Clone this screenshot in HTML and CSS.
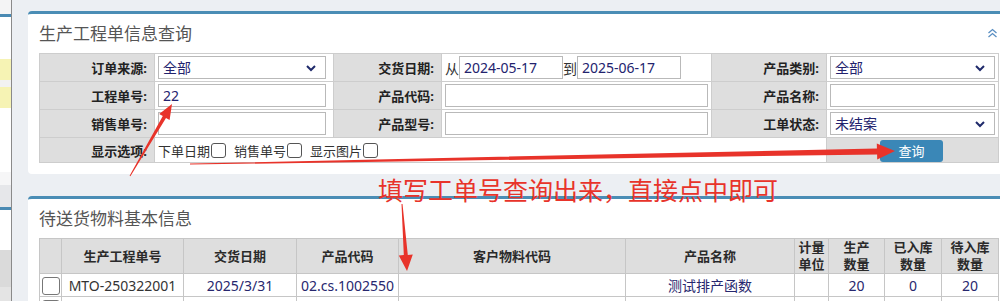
FILE: index.html
```html
<!DOCTYPE html>
<html lang="zh-CN">
<head>
  <meta charset="UTF-8">
  <title>生产工程单信息查询</title>
  <link rel="stylesheet" href="styles.css">
</head>
<body>
<div class="page">

  <div class="sidebar">
    <div class="sb-top"></div>
    <div class="sb-blue"></div>
    <div class="sb-white sb-h42"></div>
    <div class="sb-yellow"></div>
    <div class="sb-white sb-h7"></div>
    <div class="sb-yellow"></div>
    <div class="sb-white sb-h64"></div>
    <div class="sb-light"></div>
    <div class="sb-grey"></div>
    <div class="sb-blue"></div>
    <div class="sb-white sb-h40"></div>
    <div class="sb-dark"></div>
    <div class="sb-rest"></div>
  </div>

  <div class="main">

    <div class="panel">
      <div class="panel-head">
        <h3>生产工程单信息查询</h3>
        <svg class="collapse" width="11" height="10" viewBox="0 0 11 10">
          <path d="M1.5 5 L5.5 1.5 L9.5 5 M1.5 9 L5.5 5.5 L9.5 9" fill="none" stroke="#5a8fc2" stroke-width="1.3"/>
        </svg>
      </div>
      <table class="query">
        <colgroup>
          <col style="width:115px"><col style="width:179px"><col style="width:108px">
          <col style="width:270px"><col style="width:115px"><col style="width:172px">
        </colgroup>
        <tr>
          <td class="lbl">订单来源:</td>
          <td><div class="select narrow"><span>全部</span><svg width="12" height="8" viewBox="0 0 12 8"><path d="M2 2 L6 6 L10 2" fill="none" stroke="#1f2a6b" stroke-width="2"/></svg></div></td>
          <td class="lbl">交货日期:</td>
          <td><div class="dates">从<span class="box date">2024-05-17</span>到<span class="box date">2025-06-17</span></div></td>
          <td class="lbl">产品类别:</td>
          <td><div class="select"><span>全部</span><svg width="12" height="8" viewBox="0 0 12 8"><path d="M2 2 L6 6 L10 2" fill="none" stroke="#1f2a6b" stroke-width="2"/></svg></div></td>
        </tr>
        <tr>
          <td class="lbl">工程单号:</td>
          <td><div class="box narrow">22</div></td>
          <td class="lbl">产品代码:</td>
          <td><div class="box"></div></td>
          <td class="lbl">产品名称:</td>
          <td><div class="box"></div></td>
        </tr>
        <tr>
          <td class="lbl">销售单号:</td>
          <td><div class="box narrow"></div></td>
          <td class="lbl">产品型号:</td>
          <td><div class="box"></div></td>
          <td class="lbl">工单状态:</td>
          <td><div class="select"><span>未结案</span><svg width="12" height="8" viewBox="0 0 12 8"><path d="M2 2 L6 6 L10 2" fill="none" stroke="#1f2a6b" stroke-width="2"/></svg></div></td>
        </tr>
        <tr class="opts-row">
          <td class="lbl">显示选项:</td>
          <td colspan="4">
            <div class="opts">
              <span>下单日期</span><span class="chk"></span>
              <span>销售单号</span><span class="chk"></span>
              <span>显示图片</span><span class="chk"></span>
            </div>
          </td>
          <td class="btn-cell"><span class="btn">查询</span></td>
        </tr>
      </table>
    </div>

    <div class="panel second">
      <div class="panel-head">
        <h3>待送货物料基本信息</h3>
      </div>
      <table class="grid">
        <colgroup>
          <col style="width:22px"><col style="width:122px"><col style="width:113px">
          <col style="width:102px"><col style="width:227px"><col style="width:169px">
          <col style="width:34px"><col style="width:56px"><col style="width:57px"><col style="width:57px">
        </colgroup>
        <tr class="head">
          <th></th>
          <th>生产工程单号</th>
          <th>交货日期</th>
          <th>产品代码</th>
          <th>客户物料代码</th>
          <th>产品名称</th>
          <th>计量<br>单位</th>
          <th>生产<br>数量</th>
          <th>已入库<br>数量</th>
          <th>待入库<br>数量</th>
        </tr>
        <tr>
          <td><span class="chk"></span></td>
          <td class="dark">MTO-250322001</td>
          <td>2025/3/31</td>
          <td>02.cs.1002550</td>
          <td></td>
          <td>测试排产函数</td>
          <td></td>
          <td>20</td>
          <td>0</td>
          <td>20</td>
        </tr>
        <tr>
          <td><span class="chk"></span></td>
          <td></td><td></td><td></td><td></td><td></td><td></td><td></td><td></td><td></td>
        </tr>
      </table>
    </div>

  </div>

  <div class="note">填写工单号查询出来，直接点中即可</div>

  <svg class="arrows" width="1000" height="301" viewBox="0 0 1000 301">
    <polygon fill="#e8332a" points="130.4,176.3 166,117.9 169.6,120 172,104 159.2,114 162.8,116.1 129.6,175.7"/>
    <polygon fill="#e8332a" points="190,164.6 877.1,154.4 877.2,159.4 895,151 876.8,143.4 876.9,148.4 190,163.6"/>
    <polygon fill="#e8332a" points="402.5,204 407.8,254.9 412.8,254.5 407,271 398.8,255.5 403.8,255.1 401.5,204"/>
  </svg>

</div>
</body>
</html>
```

FILE: styles.css
```css
body {
  margin: 0;
  height: 301px;
  overflow: hidden;
  background-color: #eceff3;
  font-family: "Noto Sans", "Noto Sans CJK SC", sans-serif;
  color: #333;
}
.page {
  position: relative;
  display: flex;
  height: 301px;
}

/* left list peeking in */
.sidebar {
  width: 11px;
  border-right: 1px solid #8a8a8a;
  display: flex;
  flex-direction: column;
  flex-shrink: 0;
}
.sb-top { height: 14px; background: #f4f4f5; }
.sb-blue { height: 3px; background: #4a8ab3; }
.sb-white { background: #ffffff; }
.sb-h42 { height: 42px; }
.sb-h7 { height: 7px; background: #f2f2f2; }
.sb-h64 { height: 64px; }
.sb-h40 { height: 40px; }
.sb-yellow { height: 21px; background: #f6f3b4; }
.sb-light { height: 13px; background: #f6f6f7; }
.sb-grey { height: 22px; background: #e6e7ea; }
.sb-dark { height: 37px; background: #dadada; }
.sb-rest { flex: 1; background: #e4e4e4; }

.main {
  flex: 1;
  padding: 11px 0 0 16px;
  margin-right: -11px;
}
.panel {
  background: #fff;
  border-top: 3px solid #4a8db5;
  border-radius: 4px;
  padding: 0 11px 11px 11px;
}
.panel.second {
  margin-top: 22px;
}
.panel-head {
  display: flex;
  align-items: center;
  justify-content: space-between;
  height: 39px;
}
.panel-head h3 {
  margin: 0;
  font-size: 17px;
  font-weight: normal;
  color: #555;
  line-height: 24px;
  padding-top: 1px;
}
.collapse {
  margin-right: 2px;
  margin-top: -2px;
}

/* query form */
table {
  border-collapse: collapse;
  table-layout: fixed;
  width: 959px;
}
.query {
  border: 1px solid #b4b4b4;
}
.query td {
  border: 1px solid #cdcdcd;
  padding: 2px 3px;
  height: 22px;
  font-size: 13px;
}
.query td.lbl {
  background: #dedede;
  text-align: right;
  font-weight: bold;
  color: #222;
  padding-right: 7px;
}
.box, .select {
  box-sizing: border-box;
  height: 23px;
  border: 1px solid #b9b9b9;
  background: #fff;
  font-size: 14px;
  line-height: 21px;
  color: #23236e;
  padding: 0 4px;
}
.narrow {
  width: 168px;
}
.select {
  display: flex;
  align-items: center;
  justify-content: space-between;
  padding-right: 8px;
}
.dates {
  display: flex;
  align-items: center;
  font-size: 14px;
  color: #333;
}
.dates .date {
  width: 104px;
  display: block;
}
.opts-row td {
  height: 20px;
}
.opts {
  display: flex;
  align-items: center;
  font-size: 13px;
  color: #333;
}
.opts .chk {
  margin: 0 8px 0 1px;
}
.chk {
  display: inline-block;
  box-sizing: border-box;
  width: 15px;
  height: 15px;
  border: 1px solid #555;
  border-radius: 3px;
  background: #fff;
}
.query td.btn-cell {
  background: #dedede;
  padding: 2px 0 0 53px;
  vertical-align: top;
}
.btn {
  display: inline-block;
  width: 63px;
  height: 22px;
  line-height: 22px;
  text-align: center;
  background: #3a87b7;
  color: #fff;
  border-radius: 3px;
  font-size: 13px;
}

/* result grid */
.grid {
  border: 1px solid #c4c4c4;
}
.grid th {
  background: #dedede;
  border: 1px solid #c6c6c6;
  height: 33px;
  font-size: 13px;
  line-height: 17px;
  color: #2a2a2a;
  padding: 0;
}
.grid td {
  border: 1px solid #c6c6c6;
  height: 22px;
  text-align: center;
  font-size: 14px;
  color: #27276e;
  padding: 0;
}
.grid td.dark {
  color: #333;
}
.grid td .chk {
  width: 18px;
  height: 18px;
  vertical-align: middle;
  border-color: #777;
}

/* annotation */
.note {
  position: absolute;
  left: 378px;
  top: 174px;
  font-family: "Noto Sans CJK SC", sans-serif;
  font-size: 25px;
  line-height: 30px;
  color: #e8332a;
  white-space: nowrap;
}
.arrows {
  position: absolute;
  left: 0;
  top: 0;
  pointer-events: none;
}
```
